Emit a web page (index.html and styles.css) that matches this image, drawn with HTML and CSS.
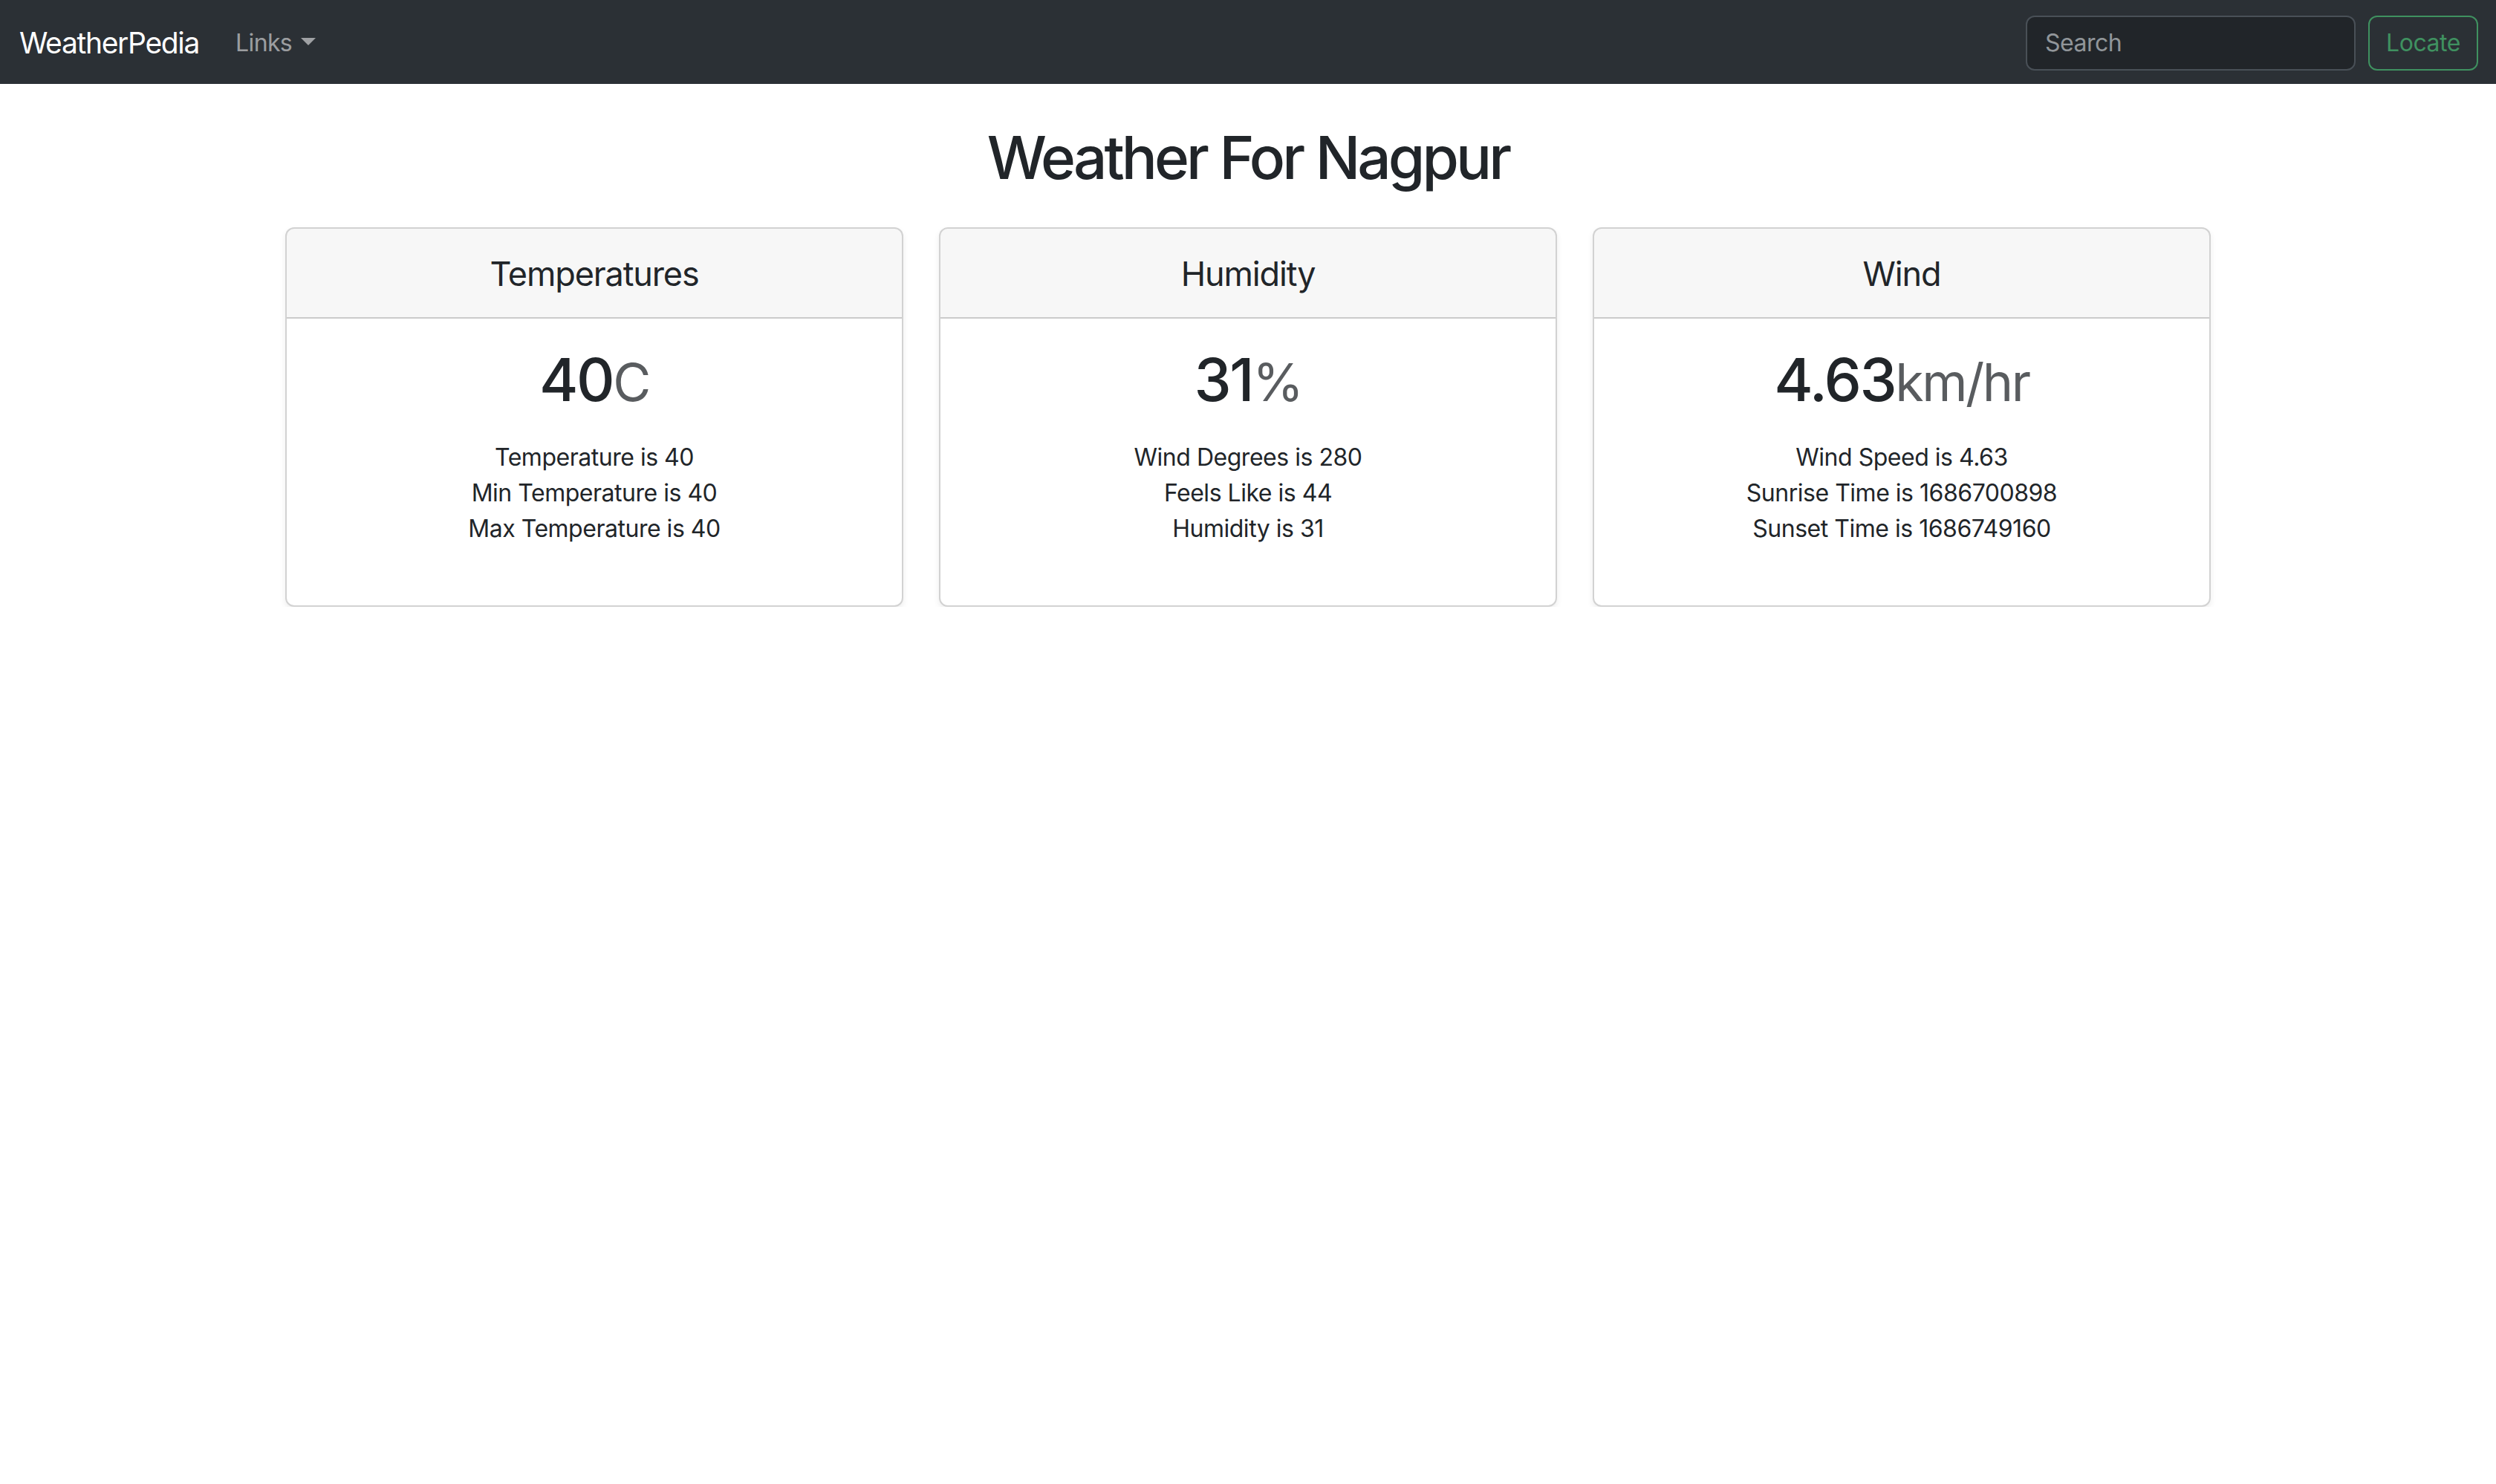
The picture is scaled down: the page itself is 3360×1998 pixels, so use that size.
FILE: index.html
```html
<!DOCTYPE html>
<html lang="en">
<head>
<meta charset="utf-8">
<title>WeatherPedia</title>
<link rel="stylesheet" href="styles.css">
</head>
<body>
<nav class="navbar">
  <div class="nav-left">
    <a class="brand" href="#">WeatherPedia</a>
    <a class="nav-link dropdown-toggle" href="#">Links</a>
  </div>
  <form class="search-form">
    <input class="search-input" type="search" placeholder="Search">
    <button class="btn-locate" type="button">Locate</button>
  </form>
</nav>
<main class="container">
  <h1 class="page-title">Weather For Nagpur</h1>
  <div class="cards">
    <div class="card">
      <div class="card-header">Temperatures</div>
      <div class="card-body">
        <div class="big-value">40<span class="unit">C</span></div>
        <div class="details">
          <div>Temperature is 40</div>
          <div>Min Temperature is 40</div>
          <div>Max Temperature is 40</div>
        </div>
      </div>
    </div>
    <div class="card">
      <div class="card-header">Humidity</div>
      <div class="card-body">
        <div class="big-value">31<span class="unit">%</span></div>
        <div class="details">
          <div>Wind Degrees is 280</div>
          <div>Feels Like is 44</div>
          <div>Humidity is 31</div>
        </div>
      </div>
    </div>
    <div class="card">
      <div class="card-header">Wind</div>
      <div class="card-body">
        <div class="big-value">4.63<span class="unit">km/hr</span></div>
        <div class="details">
          <div>Wind Speed is 4.63</div>
          <div>Sunrise Time is 1686700898</div>
          <div>Sunset Time is 1686749160</div>
        </div>
      </div>
    </div>
  </div>
</main>
</body>
</html>
```

FILE: styles.css
```css
* { box-sizing: border-box; }

html, body {
  margin: 0;
  background: #fff;
}

body {
  font-family: Inter, "Noto Sans", sans-serif;
  font-size: 32px;
  line-height: 1.5;
  color: #212529;
}

a { text-decoration: none; }

.navbar {
  height: 113px;
  background: #2b3035;
  display: flex;
  align-items: center;
  justify-content: space-between;
  padding: 2px 24px 0 26px;
}

.nav-left {
  display: flex;
  align-items: center;
}

.brand {
  font-size: 39px;
  line-height: 60px;
  color: #fff;
  margin-right: 33px;
  letter-spacing: -0.034em;
}

.nav-link {
  color: rgba(255, 255, 255, 0.55);
  padding: 16px;
  line-height: 48px;
  letter-spacing: -0.02em;
}

.dropdown-toggle::after {
  content: "";
  display: inline-block;
  margin-left: 12px;
  vertical-align: 8px;
  border-top: 10px solid;
  border-left: 10px solid transparent;
  border-right: 10px solid transparent;
}

.search-form {
  display: flex;
  align-items: center;
  gap: 17px;
}

.search-input {
  width: 444px;
  height: 74px;
  padding: 12px 24px;
  font-family: inherit;
  font-size: 32px;
  color: #dee2e6;
  background: #212529;
  border: 2px solid #495057;
  border-radius: 12px;
  outline: none;
  letter-spacing: -0.015em;
}

.search-input::placeholder {
  color: rgba(222, 226, 230, 0.6);
}

.btn-locate {
  width: 148px;
  height: 74px;
  font-family: inherit;
  font-size: 32px;
  color: #3f9160;
  background: transparent;
  border: 2px solid #3f9160;
  border-radius: 12px;
  padding: 0;
  letter-spacing: -0.015em;
}

.container {
  width: 2640px;
  margin: 0 auto;
  padding: 0 24px;
}

.page-title {
  margin: 51px 0 0;
  font-size: 80px;
  font-weight: 500;
  line-height: 96px;
  text-align: center;
  letter-spacing: -0.049em;
}

.cards {
  margin-top: 46px;
  display: grid;
  grid-template-columns: repeat(3, 1fr);
  gap: 48px;
}

.card {
  border: 2px solid rgba(0, 0, 0, 0.175);
  border-radius: 12px;
  box-shadow: 0 4px 8px rgba(0, 0, 0, 0.075);
  overflow: hidden;
  background: #fff;
}

.card-header {
  height: 121px;
  display: flex;
  align-items: center;
  justify-content: center;
  background: rgba(0, 0, 0, 0.03);
  border-bottom: 2px solid rgba(0, 0, 0, 0.175);
  font-size: 45px;
  letter-spacing: -0.025em;
  padding-top: 2px;
}

.card-body {
  padding: 34px 32px 79px;
  text-align: center;
}

.big-value {
  font-size: 80px;
  font-weight: 500;
  line-height: 96px;
  letter-spacing: -0.03em;
}

.unit {
  font-size: 70px;
  font-weight: 400;
  color: #595c5f;
  letter-spacing: -0.035em;
}

.details {
  margin-top: 29px;
  line-height: 48px;
  letter-spacing: -0.015em;
}
```
